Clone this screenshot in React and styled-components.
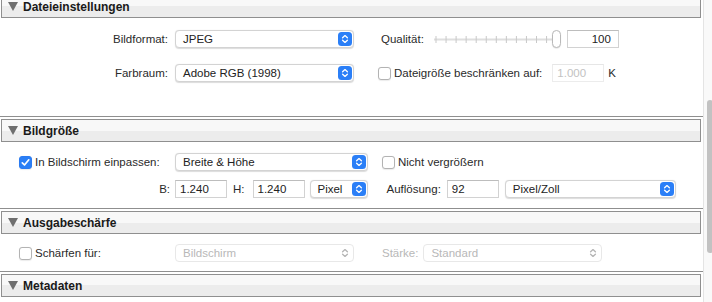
import React from "react";
import styled, { createGlobalStyle } from "styled-components";

const GlobalStyle = createGlobalStyle`
  html, body {
    margin: 0;
    padding: 0;
    background: #ffffff;
    overflow: hidden;
  }
  body {
    font-family: "Liberation Sans", Arial, sans-serif;
    font-size: 11.5px;
    color: #262626;
  }
`;

const Window = styled.div`
  display: flex;
  width: 712px;
  height: 302px;
  overflow: hidden;
`;

const Panel = styled.div`
  display: flex;
  flex-direction: column;
  width: 703px;
  margin-top: -8px;
`;

const Section = styled.section`
  border-top: 1px solid #8f8f8f;
  padding-top: 2px;
`;

const Header = styled.div`
  box-sizing: border-box;
  display: flex;
  align-items: center;
  gap: 5px;
  height: 23px;
  margin: 0 2px 0 1px;
  padding-left: 6px;
  border: 1px solid #8f8f8f;
  background: linear-gradient(#f8f8f8 0, #f8f8f8 50%, #ececec 50%, #ececec 100%);
  font-size: 12px;
  font-weight: bold;
  color: #1a1a1a;
`;

const Body = styled.div`
  display: flex;
  flex-direction: column;
  gap: ${(p) => p.$gap || 0}px;
  padding: ${(p) => p.$pad};
`;

const Row = styled.div`
  display: flex;
  align-items: center;
  height: 18px;
`;

const Label = styled.span`
  flex: none;
  width: ${(p) => p.$w || 168}px;
  margin-right: ${(p) => p.$mr || 7}px;
  text-align: right;
  white-space: nowrap;
  color: ${(p) => (p.$disabled ? "#b8b8b8" : "#2a2a2a")};
`;

const Text = styled.span`
  white-space: nowrap;
  margin: ${(p) => p.$m || "0"};
  color: ${(p) => (p.$disabled ? "#b8b8b8" : "#2a2a2a")};
`;

const CheckCell = styled.label`
  box-sizing: border-box;
  flex: none;
  display: flex;
  align-items: center;
  gap: 3px;
  width: 175px;
  padding-left: 19px;
  white-space: nowrap;
  color: #2a2a2a;
`;

const Right = styled.div`
  display: flex;
  align-items: center;
  margin-left: ${(p) => p.$ml}px;
`;

const Box = styled.span`
  box-sizing: border-box;
  flex: none;
  display: inline-flex;
  align-items: center;
  justify-content: center;
  width: 13px;
  height: 13px;
  border-radius: 3px;
  border: 1px solid ${(p) => (p.$checked ? "#2a7bf2" : "#b3b3b3")};
  background: ${(p) => (p.$checked ? "#2a7ff6" : "#ffffff")};
  box-shadow: 0 0.5px 1px rgba(0, 0, 0, 0.08);
`;

const SelectBox = styled.div`
  box-sizing: border-box;
  flex: none;
  display: flex;
  align-items: center;
  justify-content: space-between;
  width: ${(p) => p.$w}px;
  height: 18px;
  margin-left: ${(p) => p.$ml || 0}px;
  padding: 0 1px 0 7px;
  border: 1px solid ${(p) => (p.$disabled ? "#e8e8e8" : "#d3d3d3")};
  border-radius: 4px;
  background: #ffffff;
  box-shadow: ${(p) =>
    p.$disabled ? "none" : "0 0.5px 1px rgba(0, 0, 0, 0.14)"};
  color: ${(p) => (p.$disabled ? "#b8b8b8" : "#222222")};
  white-space: nowrap;
`;

const Field = styled.div`
  box-sizing: border-box;
  flex: none;
  display: flex;
  align-items: center;
  justify-content: ${(p) => (p.$right ? "flex-end" : "flex-start")};
  width: 52px;
  height: 18px;
  margin-left: ${(p) => p.$ml || 0}px;
  padding: ${(p) => (p.$right ? "0 7px 0 4px" : "0 4px")};
  border: 1px solid ${(p) => (p.$disabled ? "#ececec" : "#d2d2d2")};
  border-top-color: ${(p) => (p.$disabled ? "#e6e6e6" : "#bdbdbd")};
  background: #ffffff;
  color: ${(p) => (p.$disabled ? "#c2c2c2" : "#222222")};
`;

const Knob = styled.span`
  box-sizing: border-box;
  position: absolute;
  right: 1px;
  top: 0;
  width: 9px;
  height: 18px;
  border-radius: 5px;
  border: 1px solid #b9b9b9;
  background: #ffffff;
  box-shadow: 0 0.5px 1px rgba(0, 0, 0, 0.15);
`;

const SliderWrap = styled.div`
  position: relative;
  flex: none;
  width: 128px;
  height: 18px;
  margin-left: 10px;
`;

const ScrollTrack = styled.div`
  box-sizing: border-box;
  display: flex;
  flex-direction: column;
  width: 9px;
  height: 302px;
  border-left: 1px solid #e4e4e4;
  background: #f9f9f9;
`;

const Thumb = styled.div`
  width: 6px;
  height: 153px;
  margin: 100px 0 0 3px;
  border-radius: 3px;
  background: #c2c2c2;
`;

const Triangle = () => (
  <svg width="10" height="9" viewBox="0 0 10 9">
    <polygon points="0,0 10,0 5,9" fill="#6f6f6f" />
  </svg>
);

const Stepper = ({ disabled }) => (
  <svg width="14" height="14" viewBox="0 0 14 14">
    {!disabled && <rect x="0" y="0" width="14" height="14" rx="3.5" fill="#2b7ff7" />}
    <path
      d="M4.6 5.8 L7 3.6 L9.4 5.8 M4.6 8.2 L7 10.4 L9.4 8.2"
      fill="none"
      stroke={disabled ? "#b4b4b4" : "#ffffff"}
      strokeWidth="1.3"
      strokeLinecap="round"
      strokeLinejoin="round"
    />
  </svg>
);

const Check = () => (
  <svg width="9" height="9" viewBox="0 0 9 9">
    <path d="M1.3 4.8 L3.5 7 L7.8 1.8" fill="none" stroke="#ffffff" strokeWidth="1.7" strokeLinecap="round" strokeLinejoin="round" />
  </svg>
);

const Checkbox = ({ checked }) => <Box $checked={checked}>{checked && <Check />}</Box>;

const Select = ({ w, ml, disabled, children }) => (
  <SelectBox $w={w} $ml={ml} $disabled={disabled}>
    <span>{children}</span>
    <Stepper disabled={disabled} />
  </SelectBox>
);

const Slider = () => {
  const ticks = Array.from({ length: 13 }, (_, i) => 1.5 + i * 10.05);
  return (
    <SliderWrap>
      <svg width="128" height="18" viewBox="0 0 128 18">
        <rect x="0" y="8.5" width="124" height="2" fill="#dedede" />
        {ticks.map((x) => (
          <rect key={x} x={x} y="6" width="1" height="7" fill="#c9c9c9" />
        ))}
      </svg>
      <Knob />
    </SliderWrap>
  );
};

const SectionHeader = ({ title }) => (
  <Header>
    <Triangle />
    {title}
  </Header>
);

export default function App() {
  return (
    <>
      <GlobalStyle />
      <Window>
        <Panel>
          <Section>
            <SectionHeader title="Dateieinstellungen" />
            <Body $pad="12px 0 34px" $gap={16}>
              <Row>
                <Label>Bildformat:</Label>
                <Select w={179}>JPEG</Select>
                <Right $ml={27}>
                  <Text>Qualität:</Text>
                  <Slider />
                  <Field $right $ml={5}>100</Field>
                </Right>
              </Row>
              <Row>
                <Label>Farbraum:</Label>
                <Select w={179}>Adobe RGB (1998)</Select>
                <Right $ml={24}>
                  <Checkbox />
                  <Text $m="0 0 0 3px">Dateigröße beschränken auf:</Text>
                  <Field $disabled $ml={10}>1.000</Field>
                  <Text $m="0 0 0 4px">K</Text>
                </Right>
              </Row>
            </Body>
          </Section>

          <Section>
            <SectionHeader title="Bildgröße" />
            <Body $pad="11px 0 10px" $gap={9}>
              <Row>
                <CheckCell>
                  <Checkbox checked />
                  In Bildschirm einpassen:
                </CheckCell>
                <Select w={193}>Breite &amp; Höhe</Select>
                <Right $ml={14}>
                  <Checkbox />
                  <Text $m="0 0 0 3px">Nicht vergrößern</Text>
                </Right>
              </Row>
              <Row>
                <Label $w={170} $mr={5}>B:</Label>
                <Field>1.240</Field>
                <Text $m="0 8px 0 6px">H:</Text>
                <Field>1.240</Field>
                <Select w={58} ml={5}>Pixel</Select>
                <Right $ml={19}>
                  <Text>Auflösung:</Text>
                  <Field $ml={6}>92</Field>
                  <Select w={171} ml={6}>Pixel/Zoll</Select>
                </Right>
              </Row>
            </Body>
          </Section>

          <Section>
            <SectionHeader title="Ausgabeschärfe" />
            <Body $pad="10px 0 9px">
              <Row>
                <CheckCell>
                  <Checkbox />
                  Schärfen für:
                </CheckCell>
                <Select w={179} disabled>Bildschirm</Select>
                <Right $ml={28}>
                  <Text $disabled>Stärke:</Text>
                  <Select w={179} ml={5} disabled>Standard</Select>
                </Right>
              </Row>
            </Body>
          </Section>

          <Section>
            <SectionHeader title="Metadaten" />
          </Section>
        </Panel>
        <ScrollTrack>
          <Thumb />
        </ScrollTrack>
      </Window>
    </>
  );
}
